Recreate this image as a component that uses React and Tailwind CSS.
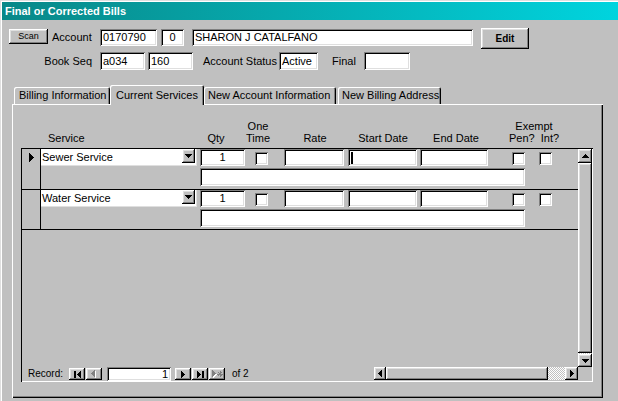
import React from "react";

const sunken =
  "bg-white shadow-[inset_1px_1px_0_#808080,inset_-1px_-1px_0_#ffffff,inset_2px_2px_0_#000000,inset_-2px_-2px_0_#dfdfdf]";
const raised =
  "bg-[#c0c0c0] shadow-[inset_-1px_-1px_0_#000000,inset_1px_1px_0_#ffffff,inset_-2px_-2px_0_#808080,inset_2px_2px_0_#dfdfdf]";
const dither =
  "bg-[image:repeating-conic-gradient(#c0c0c0_0_25%,#ffffff_0_50%)] bg-[length:2px_2px]";

const Field = ({ className = "", center, right, children }) => (
  <div
    className={`${sunken} ${className} flex items-center overflow-hidden whitespace-nowrap ${
      center ? "justify-center" : right ? "justify-end pr-[3px]" : "pl-[3px]"
    }`}
  >
    {children}
  </div>
);

const Check = ({ className = "" }) => (
  <div className={`${sunken} ${className} w-[13px] h-[13px] shrink-0`} />
);

const Tri = ({ dir, color = "#000000" }) => {
  const vert = dir === "up" || dir === "down";
  const pts = {
    up: "0,4 7,4 3.5,0",
    down: "0,0 7,0 3.5,4",
    left: "4,0 4,7 0,3.5",
    right: "0,0 0,7 4,3.5",
  }[dir];
  return (
    <svg width={vert ? 7 : 4} height={vert ? 4 : 7} shapeRendering="crispEdges">
      <polygon points={pts} fill={color} />
    </svg>
  );
};

// record navigation glyphs
const NavIcon = ({ kind }) => {
  if (kind === "first")
    return (
      <svg width="7" height="7" shapeRendering="crispEdges">
        <rect x="0" y="0" width="2" height="7" fill="#000" />
        <polygon points="7,0 7,7 3,3.5" fill="#000" />
      </svg>
    );
  if (kind === "prev")
    return (
      <svg width="6" height="8" shapeRendering="crispEdges">
        <polygon points="5,1 5,8 1,4.5" fill="#fff" />
        <polygon points="4,0 4,7 0,3.5" fill="#808080" />
      </svg>
    );
  if (kind === "next")
    return (
      <svg width="4" height="7" shapeRendering="crispEdges">
        <polygon points="0,0 0,7 4,3.5" fill="#000" />
      </svg>
    );
  if (kind === "last")
    return (
      <svg width="7" height="7" shapeRendering="crispEdges">
        <polygon points="0,0 0,7 4,3.5" fill="#000" />
        <rect x="5" y="0" width="2" height="7" fill="#000" />
      </svg>
    );
  return (
    <svg width="11" height="8" shapeRendering="crispEdges">
      <polygon points="1,1 1,8 5,4.5" fill="#fff" />
      <polygon points="0,0 0,7 4,3.5" fill="#808080" />
      <path d="M8 1v6M5 4h6M6 2l4 4M10 2l-4 4" stroke="#808080" strokeWidth="1" />
    </svg>
  );
};

const RecordRow = ({ name, current, last }) => (
  <div className={`flex ${last ? "h-[40px]" : "h-[41px]"} border-b border-black`}>
    <div className="w-[19px] border-r border-black pl-[7px] pt-[4px]">
      {current && (
        <svg width="5" height="9" shapeRendering="crispEdges">
          <polygon points="0,0 0,9 5,4.5" fill="#000" />
        </svg>
      )}
    </div>
    <div className="flex flex-col">
      <div className="flex items-start h-[17px]">
        <div className="w-[156px] h-[17px] bg-white shadow-[inset_-1px_-1px_0_#dfdfdf] flex items-start justify-between">
          <span className="pl-[1px] leading-[16px]">{name}</span>
          <div className={`${raised} w-[13px] h-[14px] mr-[2px] flex items-center justify-center`}>
            <Tri dir="down" />
          </div>
        </div>
        <Field className="ml-[3px] w-[45px] h-[17px]" center>
          1
        </Field>
        <Check className="ml-[10px] mt-[3px]" />
        <Field className="ml-[16px] w-[60px] h-[17px]" />
        <Field className="ml-[4px] w-[69px] h-[17px]">
          {current && <div className="w-[2px] h-[12px] bg-black" />}
        </Field>
        <Field className="ml-[3px] w-[68px] h-[17px]" />
        <Check className="ml-[24px] mt-[3px]" />
        <Check className="ml-[14px] mt-[3px]" />
      </div>
      <Field className="ml-[159px] mt-[2px] w-[325px] h-[18px]" />
    </div>
  </div>
);

export default function App() {
  return (
    <div className="w-[618px] h-[401px] overflow-hidden bg-[#c0c0c0] text-[11px] leading-none text-black font-['Liberation_Sans',Arial,sans-serif] shadow-[inset_1px_1px_0_#dfdfdf,inset_2px_2px_0_#ffffff]">
      {/* title bar */}
      <div className="ml-[2px] mt-[2px] h-[18px] bg-linear-to-r from-[#088888] to-[#00d4de] flex items-center pl-[3px] text-white font-bold text-[11px]">
        Final or Corrected Bills
      </div>

      {/* account row */}
      <div className="flex items-start h-[21px] mt-[8px]">
        <button className={`${raised} ml-[9px] mt-[1px] w-[39px] h-[15px] text-[9px] flex items-center justify-center`}>
          Scan
        </button>
        <span className="ml-[4px] w-[48px] h-[17px] mt-[1px] flex items-center">Account</span>
        <Field className="w-[57px] h-[17px] mt-[1px]">0170790</Field>
        <Field className="ml-[4px] w-[23px] h-[17px] mt-[1px]" center>
          0
        </Field>
        <Field className="ml-[8px] w-[281px] h-[17px] mt-[1px]">SHARON J CATALFANO</Field>
        <button className={`${raised} ml-[8px] w-[48px] h-[21px] font-bold text-[10px] flex items-center justify-center`}>
          Edit
        </button>
      </div>

      {/* book seq row */}
      <div className="flex items-center h-[18px] mt-[3px]">
        <span className="w-[93px] pr-[1px] text-right">Book Seq</span>
        <Field className="ml-[7px] w-[45px] h-[18px]">a034</Field>
        <Field className="ml-[3px] w-[45px] h-[18px]">160</Field>
        <span className="ml-[10px] w-[76px]">Account Status</span>
        <Field className="w-[39px] h-[18px]">Active</Field>
        <span className="ml-[14px] w-[32px]">Final</span>
        <Field className="w-[46px] h-[18px]" />
      </div>

      {/* tabs */}
      <div className="relative z-10 flex items-end h-[20px] mt-[15px]">
        <div className="ml-[14px] mb-[1px] w-[96px] h-[17px] pl-[5px] flex items-center rounded-t-[2px] shadow-[inset_1px_1px_0_#ffffff,inset_-1px_0_0_#000000,inset_-2px_0_0_#808080]">
          Billing Information
        </div>
        <div className="w-[94px] h-[20px] pl-[6px] flex items-center bg-[#c0c0c0] rounded-t-[2px] shadow-[inset_1px_1px_0_#ffffff,inset_-1px_0_0_#000000,inset_-2px_0_0_#808080]">
          Current Services
        </div>
        <div className="mb-[1px] w-[132px] h-[17px] pl-[4px] flex items-center rounded-t-[2px] shadow-[inset_1px_1px_0_#ffffff,inset_-1px_0_0_#000000,inset_-2px_0_0_#808080]">
          New Account Information
        </div>
        <div className="ml-[2px] mb-[1px] w-[103px] h-[17px] pl-[4px] flex items-center rounded-t-[2px] shadow-[inset_1px_1px_0_#ffffff,inset_-1px_0_0_#000000,inset_-2px_0_0_#808080]">
          New Billing Address
        </div>
      </div>

      {/* tab panel */}
      <div className="-mt-[1px] ml-[12px] w-[591px] h-[294px] shadow-[inset_1px_1px_0_#ffffff,inset_-1px_-1px_0_#000000,inset_-2px_-2px_0_#808080]">
        {/* column headers */}
        <div className="flex items-end h-[44px] pb-[4px] leading-[12px]">
          <div className="ml-[36px] w-[150px]">Service</div>
          <div className="w-[36px] text-center">Qty</div>
          <div className="w-[48px] text-center">
            One
            <br />
            Time
          </div>
          <div className="w-[66px] text-center">Rate</div>
          <div className="w-[70px] text-center">Start Date</div>
          <div className="w-[76px] text-center">End Date</div>
          <div className="w-[80px] text-center whitespace-pre">
            {"Exempt\nPen?  Int?"}
          </div>
        </div>

        {/* subform */}
        <div className="ml-[9px] w-[572px] h-[234px] p-[1px] shadow-[inset_1px_1px_0_#000000,inset_-1px_-1px_0_#ffffff]">
          <div className="flex h-[218px]">
            <div className="w-[556px] flex flex-col">
              <RecordRow name="Sewer Service" current />
              <RecordRow name="Water Service" last />
            </div>
            <div className="w-[14px] flex flex-col">
              <div className={`${raised} h-[14px] flex items-center justify-center`}>
                <Tri dir="up" />
              </div>
              <div className={`${raised} flex-1`} />
              <div className={`${dither} h-[1px]`} />
              <div className={`${raised} h-[13px] flex items-center justify-center`}>
                <Tri dir="down" />
              </div>
            </div>
          </div>

          <div className="flex h-[14px]">
            <div className="w-[352px] flex items-center">
              <span className="ml-[6px] w-[41px] text-[10px]">Record:</span>
              <div className={`${raised} w-[16px] h-[12px] flex items-center justify-center`}>
                <NavIcon kind="first" />
              </div>
              <div className={`${raised} ml-[1px] w-[16px] h-[12px] flex items-center justify-center`}>
                <NavIcon kind="prev" />
              </div>
              <Field className="ml-[5px] w-[64px] h-[14px]" right>
                1
              </Field>
              <div className={`${raised} ml-[4px] w-[16px] h-[12px] flex items-center justify-center`}>
                <NavIcon kind="next" />
              </div>
              <div className={`${raised} ml-[1px] w-[16px] h-[12px] flex items-center justify-center`}>
                <NavIcon kind="last" />
              </div>
              <div className={`${raised} ml-[1px] w-[16px] h-[12px] flex items-center justify-center`}>
                <NavIcon kind="new" />
              </div>
              <span className="ml-[7px] text-[10px]">of 2</span>
            </div>
            <div className="w-[204px] h-[13px] flex">
              <div className={`${raised} w-[12px] flex items-center justify-center`}>
                <Tri dir="left" />
              </div>
              <div className={`${raised} w-[162px]`} />
              <div className={`${dither} w-[17px]`} />
              <div className={`${raised} w-[13px] flex items-center justify-center`}>
                <Tri dir="right" />
              </div>
            </div>
            <div className="w-[14px]" />
          </div>
        </div>
      </div>
    </div>
  );
}
